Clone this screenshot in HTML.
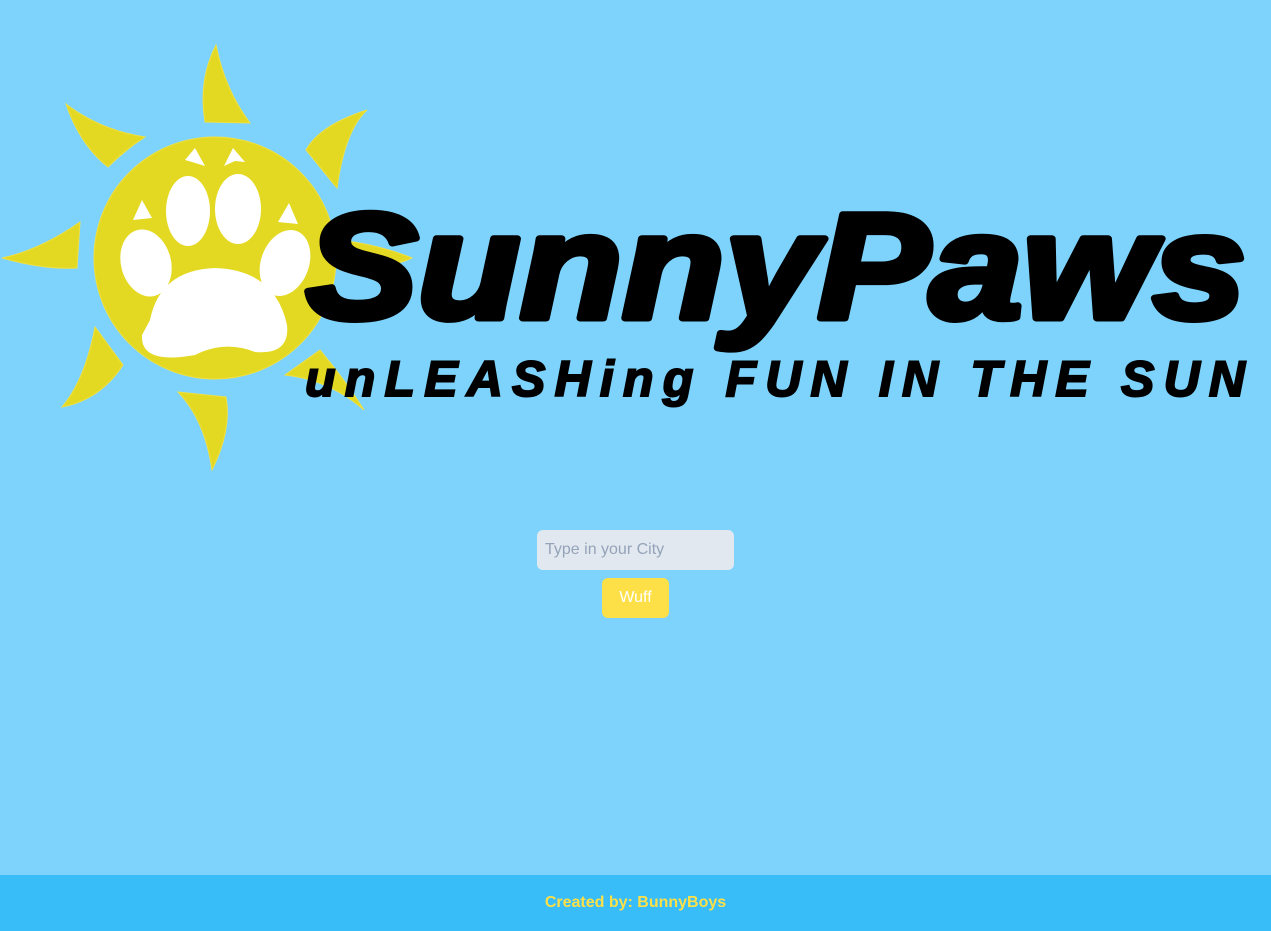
<!DOCTYPE html>
<html><head><meta charset="utf-8"><style>
html,body{margin:0;padding:0;width:1271px;height:931px;overflow:hidden;background:#7dd3fc;font-family:"Liberation Sans",sans-serif}
svg{position:absolute;left:0;top:0}
.inp{position:absolute;left:537px;top:530px;width:197px;height:40px;background:#e2e8f0;border-radius:6px;box-sizing:border-box;padding-left:8px;line-height:40px;color:#94a3b8;font-size:16px}
.btn{position:absolute;left:602px;top:578px;width:67px;height:40px;background:#fde047;border-radius:6px;color:#fff;font-size:16px;text-align:center;line-height:40px}
.foot{position:absolute;left:0;top:875px;width:1271px;height:56px;background:#38bdf8;color:#fde047;font-weight:bold;font-size:16px;text-align:center;line-height:56px}
</style></head><body>
<svg width="1271" height="931" viewBox="0 0 1271 931">
<g fill="#e4d922" stroke="#f0e040" stroke-width="1">
<path d="M216 45 Q198 80 205 122 L250 123 Q225 90 216 45Z"/>
<path d="M367 110 Q320 125 306 150 L337 188 Q345 130 367 110Z"/>
<path d="M340 240 Q380 245 412 258 Q385 270 340 270Z"/>
<path d="M320 350 L285 375 Q330 380 364 410 Q345 380 320 350Z"/>
<path d="M178 392 Q205 420 212 470 Q232 430 226 397Z"/>
<path d="M95 327 Q85 380 62 407 Q100 400 123 365Z"/>
<path d="M80 222 Q40 250 2 258 Q45 270 77 268Z"/>
<path d="M66 104 Q80 145 108 167 Q125 150 145 137 Q100 130 66 104Z"/>
<circle cx="215" cy="258" r="121"/>
</g>
<g fill="#fff">
<path d="M185 160 L195 148 L205 166 L192 162Z"/>
<path d="M224 166 L233 148 L245 162 L235 161Z"/>
<path d="M133 220 L142 200 L152 218Z"/>
<path d="M278 222 L289 203 L298 224Z"/>
<ellipse cx="188" cy="211" rx="22" ry="35"/>
<ellipse cx="238" cy="209" rx="23" ry="35"/>
<ellipse cx="146" cy="263" rx="25" ry="34" transform="rotate(-15 146 263)"/>
<ellipse cx="285" cy="263" rx="24" ry="34" transform="rotate(20 285 263)"/>
<path d="M150 320 Q160 270 215 268 Q275 270 287 325 Q290 355 255 352 Q225 340 195 355 Q140 365 142 335Z"/>
</g>
<text x="306" y="318" font-family="Liberation Sans" font-weight="bold" font-style="italic" font-size="150" stroke="#000" stroke-width="7" stroke-linejoin="round" textLength="940" lengthAdjust="spacingAndGlyphs">SunnyPaws</text>
<text x="305" y="396" font-family="Liberation Sans" font-weight="bold" font-style="italic" font-size="50" stroke="#000" stroke-width="2" textLength="940" lengthAdjust="spacing">unLEASHing FUN IN THE SUN</text>
</svg>
<div class="inp">Type in your City</div>
<div class="btn">Wuff</div>
<div class="foot">Created by: BunnyBoys</div>
</body></html>
